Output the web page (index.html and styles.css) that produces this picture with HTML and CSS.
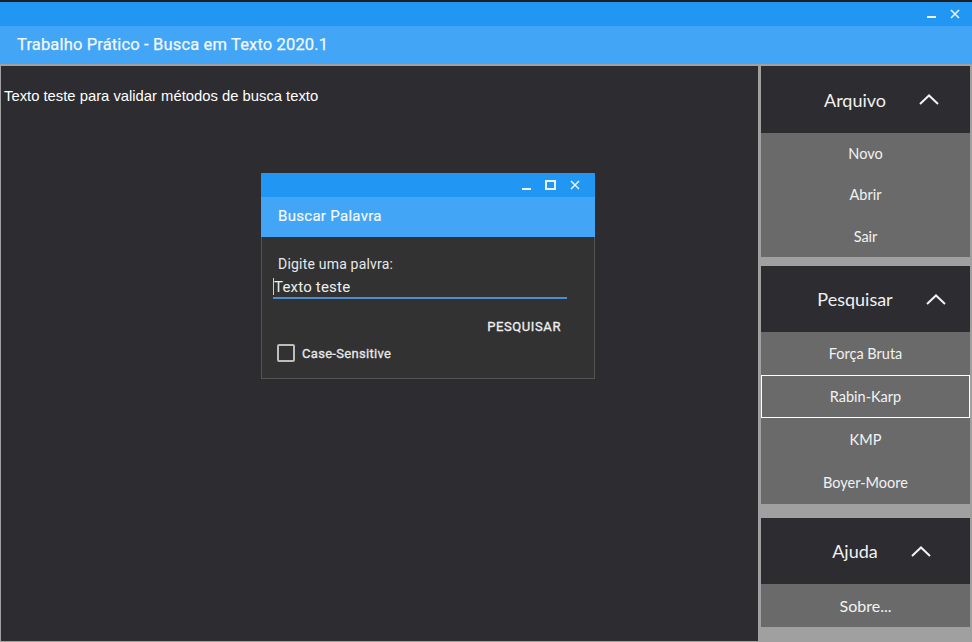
FILE: index.html
```html
<!DOCTYPE html>
<html lang="pt">
<head>
<meta charset="utf-8">
<title>Trabalho Prático - Busca em Texto 2020.1</title>
<link rel="stylesheet" href="styles.css">
</head>
<body>
<div class="app">
  <div class="topstrip"></div>
  <div class="titlebar">
    <span class="wbtn min"></span>
    <svg class="wbtn-x" width="10" height="10" viewBox="0 0 10 10"><path d="M1 1L9 9M9 1L1 9" stroke="#e8f2fd" stroke-width="1.6"/></svg>
  </div>
  <div class="appbar">Trabalho Prático - Busca em Texto 2020.1</div>
  <div class="content">
    <div class="main">
      <p class="doc">Texto teste para validar métodos de busca texto</p>
      <div class="dialog">
        <div class="dlg-bar">
          <span class="dmin"></span>
          <span class="dmax"></span>
          <svg class="dclose" width="10" height="10" viewBox="0 0 10 10"><path d="M1 1L9 9M9 1L1 9" stroke="#e8f2fd" stroke-width="1.5"/></svg>
        </div>
        <div class="dlg-title">Buscar Palavra</div>
        <div class="dlg-body">
          <div class="label">Digite uma palvra:</div>
          <div class="input"><span class="caret"></span>Texto teste</div>
          <div class="actions"><span class="btn">PESQUISAR</span></div>
          <div class="check"><span class="box"></span><span>Case-Sensitive</span></div>
        </div>
      </div>
    </div>
    <div class="sidebar">
      <div class="section s1">
        <div class="head"><span>Arquivo</span><svg class="chev" width="20" height="11" viewBox="0 0 20 11"><path d="M1 10L10 1.5L19 10" fill="none" stroke="#f2f2f2" stroke-width="2"/></svg></div>
        <div class="items">
          <div class="item h41">Novo</div>
          <div class="item h41">Abrir</div>
          <div class="item h42">Sair</div>
        </div>
      </div>
      <div class="section s2">
        <div class="head"><span>Pesquisar</span><svg class="chev" width="20" height="11" viewBox="0 0 20 11"><path d="M1 10L10 1.5L19 10" fill="none" stroke="#f2f2f2" stroke-width="2"/></svg></div>
        <div class="items">
          <div class="item h43">Força Bruta</div>
          <div class="item h43 sel">Rabin-Karp</div>
          <div class="item h43">KMP</div>
          <div class="item h43">Boyer-Moore</div>
        </div>
      </div>
      <div class="section s3">
        <div class="head"><span>Ajuda</span><svg class="chev" width="20" height="11" viewBox="0 0 20 11"><path d="M1 10L10 1.5L19 10" fill="none" stroke="#f2f2f2" stroke-width="2"/></svg></div>
        <div class="items">
          <div class="item h43 big">Sobre...</div>
        </div>
      </div>
    </div>
  </div>
</div>
</body>
</html>
```
FILE: styles.css
```css
html, body {
  margin: 0;
  padding: 0;
}
body {
  width: 972px;
  height: 642px;
  overflow: hidden;
  background: #a0a0a0;
}
.app {
  width: 972px;
  height: 642px;
  display: flex;
  flex-direction: column;
}
.topstrip {
  height: 2px;
  background: #1e1e1e;
}
.titlebar {
  height: 24px;
  background: #2196f3;
  display: flex;
  align-items: center;
  justify-content: flex-end;
  padding-right: 12px;
  gap: 14px;
}
.wbtn.min {
  width: 9px;
  height: 2px;
  background: #e8f2fd;
  margin-top: 6px;
}
.appbar {
  height: 38px;
  background: #42a5f5;
  color: #f4f8fc;
  font-family: Roboto, "Liberation Sans", sans-serif;
  font-weight: 400;
  font-size: 16.5px;
  line-height: 38px;
  padding-left: 17px;
  letter-spacing: 0.15px;
  -webkit-text-stroke: 0.25px #f4f8fc;
}
.content {
  margin-top: 2px;
  flex: 1;
  display: flex;
  min-height: 0;
}
.main {
  width: 757px;
  margin-left: 1px;
  margin-bottom: 1px;
  background: #2d2c31;
  position: relative;
}
.doc {
  margin: 0;
  padding: 21px 0 0 3px;
  font-family: "Liberation Sans", Arial, sans-serif;
  font-size: 14.8px;
  color: #ffffff;
  line-height: 18px;
}
.dialog {
  position: absolute;
  left: 260px;
  top: 107px;
  width: 334px;
  display: flex;
  flex-direction: column;
  font-family: Roboto, "Liberation Sans", sans-serif;
}
.dlg-bar {
  height: 24px;
  background: #2196f3;
  display: flex;
  align-items: center;
  justify-content: flex-end;
  padding-right: 15px;
  gap: 14px;
}
.dmin {
  width: 9px;
  height: 2px;
  background: #e8f2fd;
  margin-top: 7px;
}
.dmax {
  width: 7px;
  height: 6px;
  border: 2px solid #e8f2fd;
}
.dlg-title {
  height: 40px;
  background: #42a5f5;
  color: #f4f8fc;
  font-size: 15px;
  font-weight: 400;
  letter-spacing: 0.3px;
  -webkit-text-stroke: 0.2px #f4f8fc;
  line-height: 39px;
  padding-left: 17px;
}
.dlg-body {
  background: #323232;
  border: 1px solid #545454;
  border-top: none;
  height: 142px;
  padding: 19px 0 0 11px;
  box-sizing: border-box;
  color: #e8e8e8;
}
.label {
  font-size: 14px;
  line-height: 16px;
  padding-left: 5px;
  letter-spacing: 0.2px;
}
.input {
  margin-top: 4px;
  width: 293px;
  border-bottom: 2px solid #4a8dd0;
  font-size: 15px;
  line-height: 20px;
  height: 21px;
  padding-left: 1px;
  display: flex;
  align-items: center;
  color: #eeeeee;
  letter-spacing: 0.2px;
}
.caret {
  width: 1px;
  height: 17px;
  background: #cfcfcf;
  margin-left: -1px;
}
.actions {
  display: flex;
  justify-content: flex-end;
  width: 288px;
  margin-top: 20px;
}
.btn {
  font-size: 13px;
  font-weight: 400;
  letter-spacing: 0.6px;
  line-height: 16px;
  color: #f0f0f0;
  -webkit-text-stroke: 0.3px #f0f0f0;
}
.check {
  display: flex;
  align-items: center;
  margin-top: 9px;
  padding-left: 4px;
  font-size: 13px;
  font-weight: 400;
  gap: 7px;
  color: #e8e8e8;
  letter-spacing: 0.3px;
  -webkit-text-stroke: 0.3px #e8e8e8;
}
.box {
  width: 14px;
  height: 14px;
  border: 2px solid #bdbdbd;
  border-radius: 2px;
}
.sidebar {
  flex: 1;
  display: flex;
  flex-direction: column;
  padding: 0 2px 0 3px;
  font-family: Lato, "Open Sans", sans-serif;
}
.section {
  display: flex;
  flex-direction: column;
}
.s2 { margin-top: 9px; }
.s3 { margin-top: 14px; }
.head {
  height: 66px;
  background: #2d2c31;
  color: #f0f0f0;
  font-size: 18px;
  display: flex;
  align-items: center;
  justify-content: center;
  padding-left: 32px;
  gap: 33px;
}
.s1 .head { height: 67px; }
.chev { display: block; }
.items {
  background: #6a6a6a;
  display: flex;
  flex-direction: column;
}
.item {
  color: #f2f2f2;
  font-size: 14.5px;
  display: flex;
  align-items: center;
  justify-content: center;
  box-sizing: border-box;
}
.h41 { height: 41px; }
.h42 { height: 42px; }
.h43 { height: 43px; }
.item.sel {
  border: 1px solid #ffffff;
}
.item.big {
  font-size: 16px;
}
```
